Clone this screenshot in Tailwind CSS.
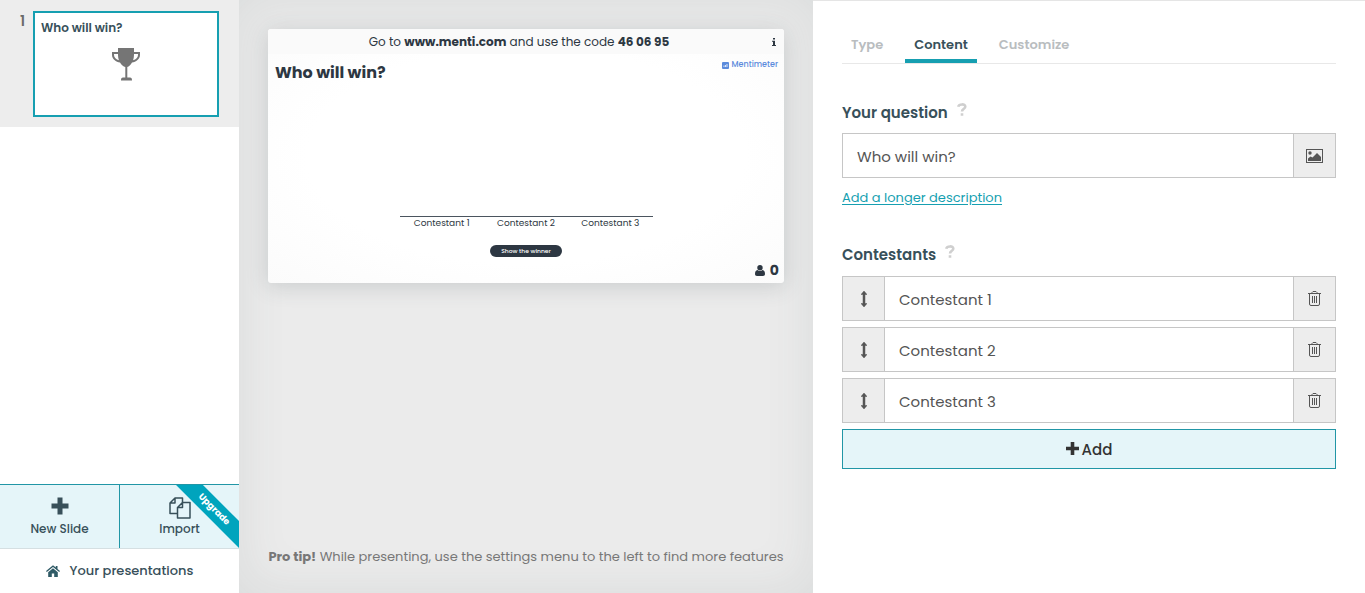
<!doctype html>
<html lang="en">
    <head>
        <meta charset="UTF-8" />
        <meta name="viewport" content="width=device-width, initial-scale=1.0" />
        <title>Who will win? - Mentimeter</title>
        <script src="https://cdn.jsdelivr.net/npm/@tailwindcss/browser@4"></script>
    </head>

    <body class="flex min-h-screen bg-white font-['Poppins','Inter',sans-serif] text-[#38505a]">
        <!-- Slide list -->
        <aside class="flex w-[239px] shrink-0 flex-col">
            <div class="flex bg-[#ededed] pt-[11px] pr-5 pb-[10px]">
                <span class="w-[33px] pr-2 text-right text-[14px] leading-5 font-semibold text-[#6b6b6b]">1</span>
                <button
                    class="flex h-[106px] flex-1 flex-col items-center border-2 border-[#169fb1] bg-white px-[6px] pt-[7px]"
                >
                    <span class="self-start text-[12px] leading-4 font-semibold">Who will win?</span>
                    <svg class="mt-[11px] h-[34px] w-[30px]" viewBox="0 0 30 34" fill="#757575">
                        <path
                            fill-rule="evenodd"
                            d="M7 1h16v4h6v3c0 4-4 7-8 7.500-1.500 2.500-3 4-4.700 4.500V30.500h2.700c1.500 0 2 .800 2 3H10c0-2.200.500-3 2-3h2.300V20c-2-.500-3.800-2-5.300-4.500C5 15 1 12 1 8V5h6zM7 7H3v1c0 2.500 2 4.500 5 5.300C7.300 11.500 7 9.500 7 7zM23 7c0 2.500-.300 4.500-1 6.300 3-.800 5-2.800 5-5.300V7z"
                        />
                    </svg>
                </button>
            </div>

            <div class="mt-auto flex h-16 border-t border-[#2196a6] bg-[#e5f5f9] text-[12px] leading-5 font-medium">
                <button class="flex w-[120px] flex-col items-center border-r border-[#2196a6] pt-3">
                    <svg class="h-[18px] w-[18px]" viewBox="0 0 18 18" fill="#38505a">
                        <path d="M6.500 0.500h5v6h6v5h-6v6h-5v-6h-6v-5h6z" />
                    </svg>
                    <span class="mt-1">New Slide</span>
                </button>
                <button class="relative flex flex-1 flex-col items-center overflow-hidden pt-3">
                    <svg
                        class="h-[22px] w-[22px] shrink-0"
                        viewBox="0 0 22 22"
                        fill="none"
                        stroke="#38505a"
                        stroke-width="1.500"
                        stroke-linejoin="round"
                    >
                        <path d="M8.500 16.500H1V6l5-5h7.500v4.500M1 6h5V1" />
                        <path d="M13.500 5.500H21V21H8.500V10.500zM8.500 10.500h5v-5" />
                    </svg>
                    <span>Import</span>
                    <span
                        class="absolute top-[15px] -right-[25px] h-[19px] w-[100px] rotate-45 bg-[#00a4bd] text-center text-[9px] leading-[18px] font-bold text-white"
                        >Upgrade</span
                    >
                </button>
            </div>
            <a
                href="#"
                class="flex h-[45px] items-center justify-center border-t border-[#d5dfe2] text-[13px] font-medium"
            >
                <svg class="mr-[10px] h-3 w-[14px]" viewBox="0 0 14 12" fill="#2f5a66">
                    <path d="M7 3.300l4.800 4V12H8.200V8.500H5.800V12H2.200V7.300z" />
                    <path d="M7 .300l2.800 2.300V1h1.700v3L14 6l-.800 1L7 1.900.800 7 0 6z" />
                </svg>
                Your presentations
            </a>
        </aside>

        <!-- Slide preview -->
        <main
            class="flex min-w-0 flex-1 flex-col bg-[#ebebeb] px-[29px] pt-[29px] pb-[26px] shadow-[inset_0_0_50px_rgba(70,85,85,0.10)]"
        >
            <section
                class="flex h-[254px] flex-col rounded-[3px] bg-white bg-radial from-white from-60% to-[#fbfbfb] text-[#2d3742] shadow-[0_3px_22px_rgba(60,75,80,0.20)]"
            >
                <header class="flex h-[25px] items-center rounded-t-[3px] bg-[#fafafa] pr-[6px]">
                    <p class="flex-1 text-center text-[12px]">
                        Go to <b>www.menti.com</b> and use the code <b>46 06 95</b>
                    </p>
                    <button class="w-2" aria-label="Info">
                        <svg class="h-2 w-2" viewBox="0 0 8 8" fill="#2d3742">
                            <path d="M3 0h2v1.600H3zM2 2.800h3V7h1v1H2V7h1V3.800H2z" />
                        </svg>
                    </button>
                </header>
                <div class="flex items-start justify-between pr-[6px] pl-[7px]">
                    <h1 class="pt-[7px] text-[16px] leading-6 font-bold">Who will win?</h1>
                    <div class="flex items-center gap-[2px] pt-1 text-[8px] leading-[14px] font-medium text-[#5b8bdc]">
                        <svg class="h-[7px] w-[7px]" viewBox="0 0 7 7">
                            <rect width="7" height="7" rx="1" fill="#5b8bdc" />
                            <path d="M2 5V3.500M3.500 5V3M5 5V2" stroke="#fff" stroke-width=".8" />
                        </svg>
                        Mentimeter
                    </div>
                </div>
                <div class="mt-auto flex flex-col items-center">
                    <div class="grid w-[253px] grid-cols-3 border-t border-[#4b555f] text-center text-[9px] leading-3">
                        <span>Contestant 1</span>
                        <span>Contestant 2</span>
                        <span>Contestant 3</span>
                    </div>
                    <button
                        class="mt-4 h-3 w-[72px] rounded-full bg-[#2d3742] text-[6px] leading-3 font-medium text-white"
                    >
                        Show the winner
                    </button>
                </div>
                <div class="mt-1 flex items-center justify-end gap-[5px] pr-[5px] pb-[3px] text-[14px] leading-[19px] font-bold">
                    <svg class="h-[11px] w-[10px]" viewBox="0 0 10 11" fill="#2d3742">
                        <circle cx="5" cy="2.700" r="2.700" />
                        <path d="M2.500 5C3.800 6.300 6.200 6.300 7.500 5 9.300 5.300 10 7 10 9c0 1.300-.700 2-2 2H2c-1.300 0-2-.700-2-2 0-2 .700-3.700 2.500-4z" />
                    </svg>
                    0
                </div>
            </section>
            <p class="mt-auto text-center text-[13px] leading-5 text-[#777]">
                <b>Pro tip!</b> While presenting, use the settings menu to the left to find more features
            </p>
        </main>

        <!-- Settings -->
        <section class="w-[552px] shrink-0 border-t border-[#e5e5e5] px-[29px]">
            <nav class="flex h-[63px] items-end gap-[13px] border-b border-[#e8e8e8] text-[13px] leading-5 font-semibold">
                <a href="#" class="border-b-4 border-transparent px-[9px] pb-1 text-[#b9bdbf]">Type</a>
                <a href="#" class="border-b-4 border-[#169fb1] px-[9px] pb-1">Content</a>
                <a href="#" class="border-b-4 border-transparent px-[9px] pb-1 text-[#b9bdbf]">Customize</a>
            </nav>

            <form>
                <div class="mt-[37px] flex h-6 gap-[9px]">
                    <label for="question" class="text-[15px] leading-6 font-semibold">Your question</label>
                    <button type="button" class="mt-[2px] self-start" aria-label="Help">
                        <svg class="h-[13px] w-[10px]" viewBox="0 0 10 13" fill="none" stroke="#cfcfcf" stroke-width="2.600">
                            <path d="M1.200 3.800C2 .700 8.300.600 8.300 3.700 8.300 5.800 5 5.800 5 8.600M5 10.200v2.600" />
                        </svg>
                    </button>
                </div>
                <div class="mt-2 flex h-[45px] border border-[#c6c6c6] text-[#555]">
                    <input
                        id="question"
                        type="text"
                        value="Who will win?"
                        class="min-w-0 flex-1 px-[14px] pt-[3px] text-[15px]"
                    />
                    <button
                        type="button"
                        aria-label="Add image"
                        class="flex w-[42px] items-center justify-center border-l border-[#c6c6c6] bg-[#ededed]"
                    >
                        <svg class="h-[14px] w-[17px]" viewBox="0 0 17 14" fill="#555">
                            <path fill-rule="evenodd" d="M0 0h17v14H0zM1 1v12h15V1z" />
                            <circle cx="4" cy="4" r="1.700" />
                            <path d="M2 12V9.500l2.500-2 2 1L11 4l4 4v4z" />
                        </svg>
                    </button>
                </div>
                <a href="#" class="mt-[10px] block w-fit text-[13px] leading-5 text-[#169fb1] underline underline-offset-2"
                    >Add a longer description</a
                >

                <div class="mt-[35px] flex h-6 gap-[9px]">
                    <h2 class="text-[15px] leading-6 font-semibold">Contestants</h2>
                    <button type="button" class="mt-[2px] self-start" aria-label="Help">
                        <svg class="h-[13px] w-[10px]" viewBox="0 0 10 13" fill="none" stroke="#cfcfcf" stroke-width="2.600">
                            <path d="M1.200 3.800C2 .700 8.300.600 8.300 3.700 8.300 5.800 5 5.800 5 8.600M5 10.200v2.600" />
                        </svg>
                    </button>
                </div>
                <div class="mt-[9px] flex flex-col gap-[6px] text-[#555]" id="rows"></div>
                <button
                    type="button"
                    class="mt-[6px] flex h-10 w-full items-center justify-center gap-[3px] border border-[#2196a6] bg-[#e5f5f9] text-[15px] font-medium text-[#333]"
                >
                    <svg class="mb-[2px] h-[13px] w-[13px]" viewBox="0 0 13 13" fill="#333">
                        <path d="M4.700 0h3.600v4.700H13v3.600H8.300V13H4.700V8.300H0V4.700h4.700z" />
                    </svg>
                    <span class="pt-[2px]">Add</span>
                </button>
            </form>
        </section>

        <template id="rowTemplate">
            <div class="flex h-[45px] border border-[#c6c6c6]">
                <button
                    type="button"
                    aria-label="Move"
                    class="flex w-[42px] items-center justify-center border-r border-[#c6c6c6] bg-[#ededed]"
                >
                    <svg class="h-4 w-[6px]" viewBox="0 0 6 16" fill="#555">
                        <path d="M3 0l3 3.500H4v9h2L3 16l-3-3.500h2v-9H0z" stroke="#555" stroke-width=".5" />
                    </svg>
                </button>
                <input type="text" class="min-w-0 flex-1 px-[14px] pt-[3px] text-[15px]" />
                <button
                    type="button"
                    aria-label="Delete"
                    class="flex w-[42px] items-center justify-center border-l border-[#c6c6c6] bg-[#ededed]"
                >
                    <svg class="h-[15px] w-[13px]" viewBox="0 0 13 15" fill="none" stroke="#555">
                        <path d="M0 2.500h13M4 2.500v-1l1-1h3l1 1v1M1.500 2.500V13q0 1.500 1.500 1.500h7q1.500 0 1.500-1.500V2.500M4.500 5v7M6.500 5v7M8.500 5v7" />
                    </svg>
                </button>
            </div>
        </template>

        <script>
            const rows = document.getElementById("rows");
            const template = document.getElementById("rowTemplate");
            ["Contestant 1", "Contestant 2", "Contestant 3"].forEach((name) => {
                const row = template.content.cloneNode(true);
                const input = row.querySelector("input");
                input.value = name;
                input.setAttribute("aria-label", name);
                rows.appendChild(row);
            });
        </script>
    </body>
</html>
